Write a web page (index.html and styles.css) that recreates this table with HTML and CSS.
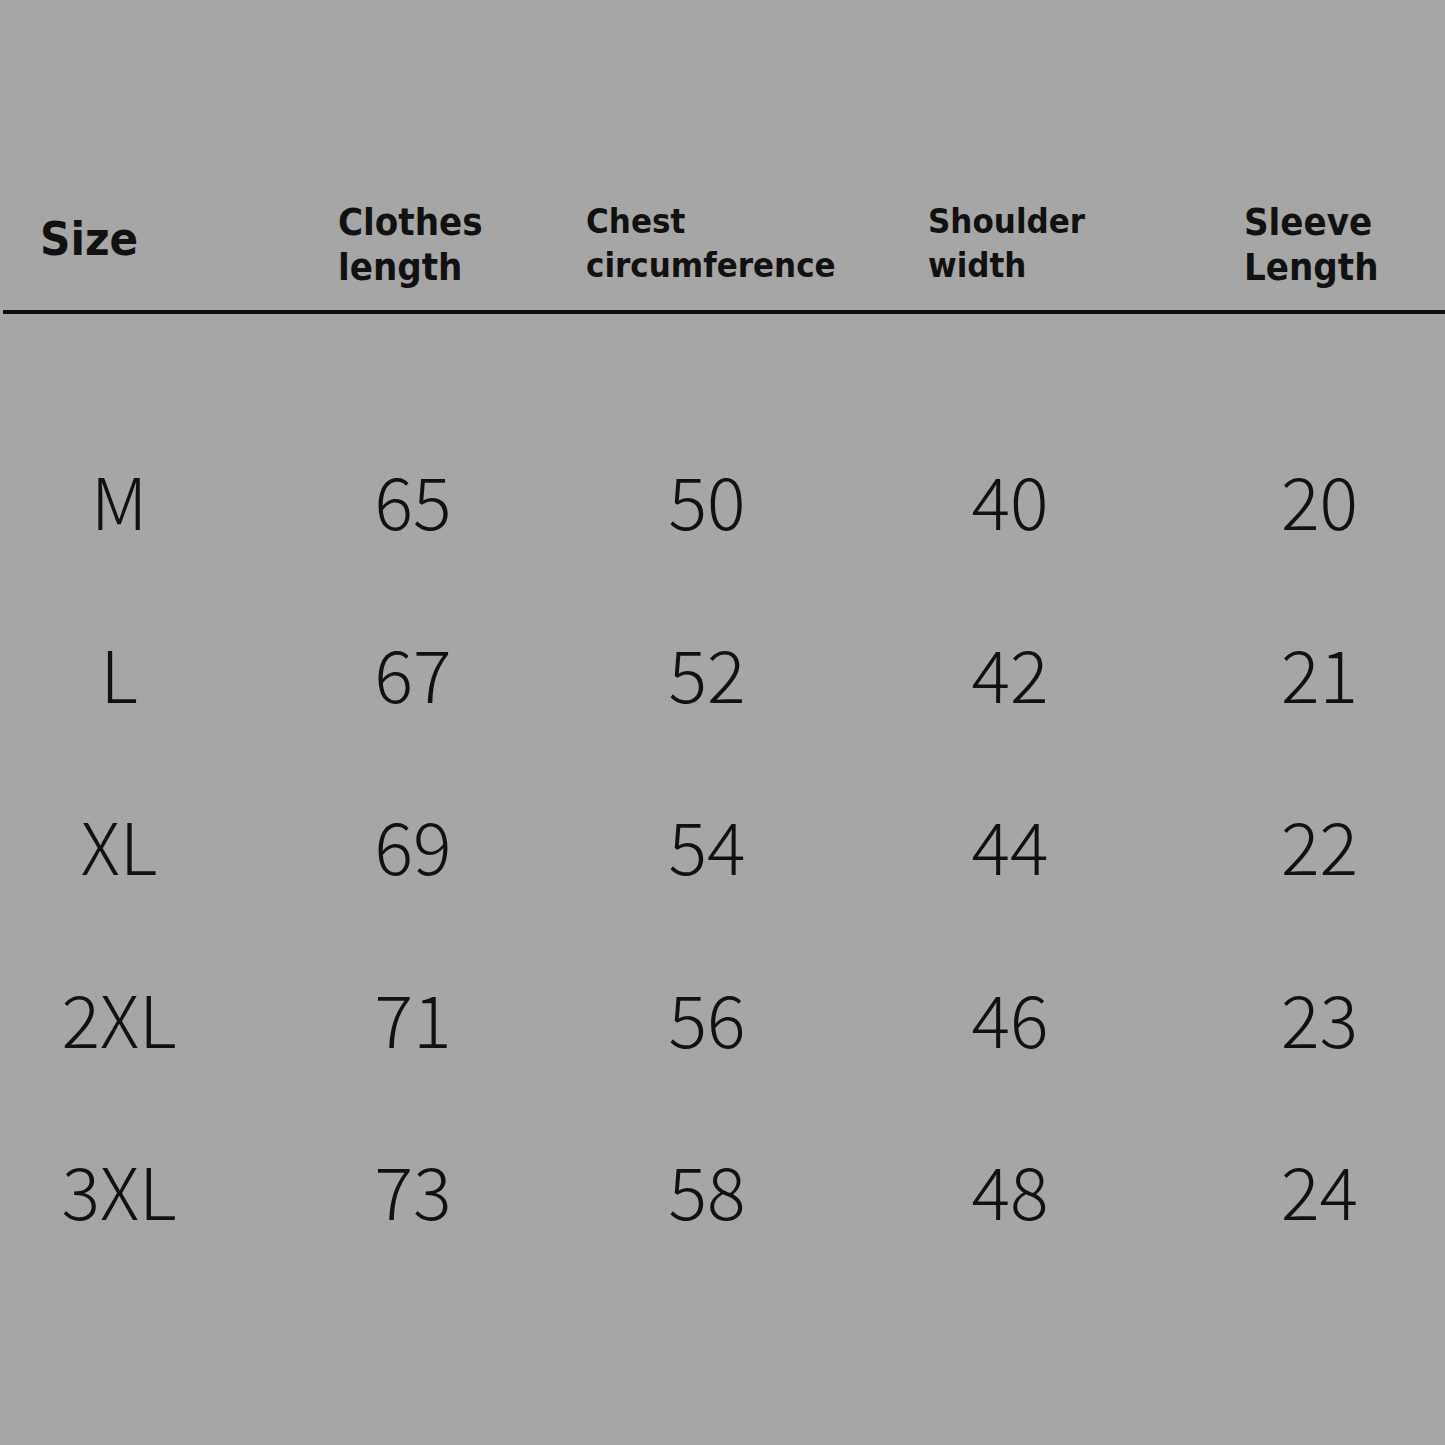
FILE: index.html
```html
<!DOCTYPE html>
<html>
<head>
<meta charset="utf-8">
<link rel="stylesheet" href="styles.css">
</head>
<body>
<div class="page">
  <div class="head">
    <div class="h h-size">Size</div>
    <div class="h h-big">Clothes<br>length</div>
    <div class="h h-small">Chest<br>circumference</div>
    <div class="h h-small">Shoulder<br>width</div>
    <div class="h h-big">Sleeve<br>Length</div>
  </div>
  <div class="rule"></div>
  <div class="rows">
    <div class="row"><span>M</span><span>65</span><span>50</span><span>40</span><span>20</span></div>
    <div class="row"><span>L</span><span>67</span><span>52</span><span>42</span><span>21</span></div>
    <div class="row"><span>XL</span><span>69</span><span>54</span><span>44</span><span>22</span></div>
    <div class="row"><span>2XL</span><span>71</span><span>56</span><span>46</span><span>23</span></div>
    <div class="row"><span>3XL</span><span>73</span><span>58</span><span>48</span><span>24</span></div>
  </div>
</div>
</body>
</html>
```

FILE: styles.css
```css
html, body {
  margin: 0;
  padding: 0;
  background: #a6a6a6;
}
.page {
  width: 1445px;
  height: 1445px;
  background: #a6a6a6;
  color: #111;
}
.head {
  height: 310px;
  box-sizing: border-box;
  padding: 0 0 20px 40px;
  display: grid;
  grid-template-columns: 298px 248px 342px 316px 1fr;
  align-items: end;
}
.h {
  font-family: "DejaVu Sans Condensed", "DejaVu Sans", sans-serif;
  font-weight: bold;
  line-height: 45px;
}
.h-size {
  font-size: 47px;
  padding-bottom: 29px;
}
.h-big {
  font-size: 38px;
}
.h-small {
  font-size: 34.5px;
  line-height: 44px;
  padding-bottom: 3px;
}
.rule {
  margin-left: 3px;
  height: 4px;
  background: #0d0d0d;
}
.rows {
  padding-top: 99px;
}
.row {
  display: grid;
  grid-template-columns: 238px 350px 238px 368px 251px;
  justify-items: center;
  align-items: center;
  height: 172.5px;
  font-family: "Noto Sans CJK SC", "Noto Sans", sans-serif;
  font-weight: 300;
  font-size: 72px;
  line-height: 1;
}
```
